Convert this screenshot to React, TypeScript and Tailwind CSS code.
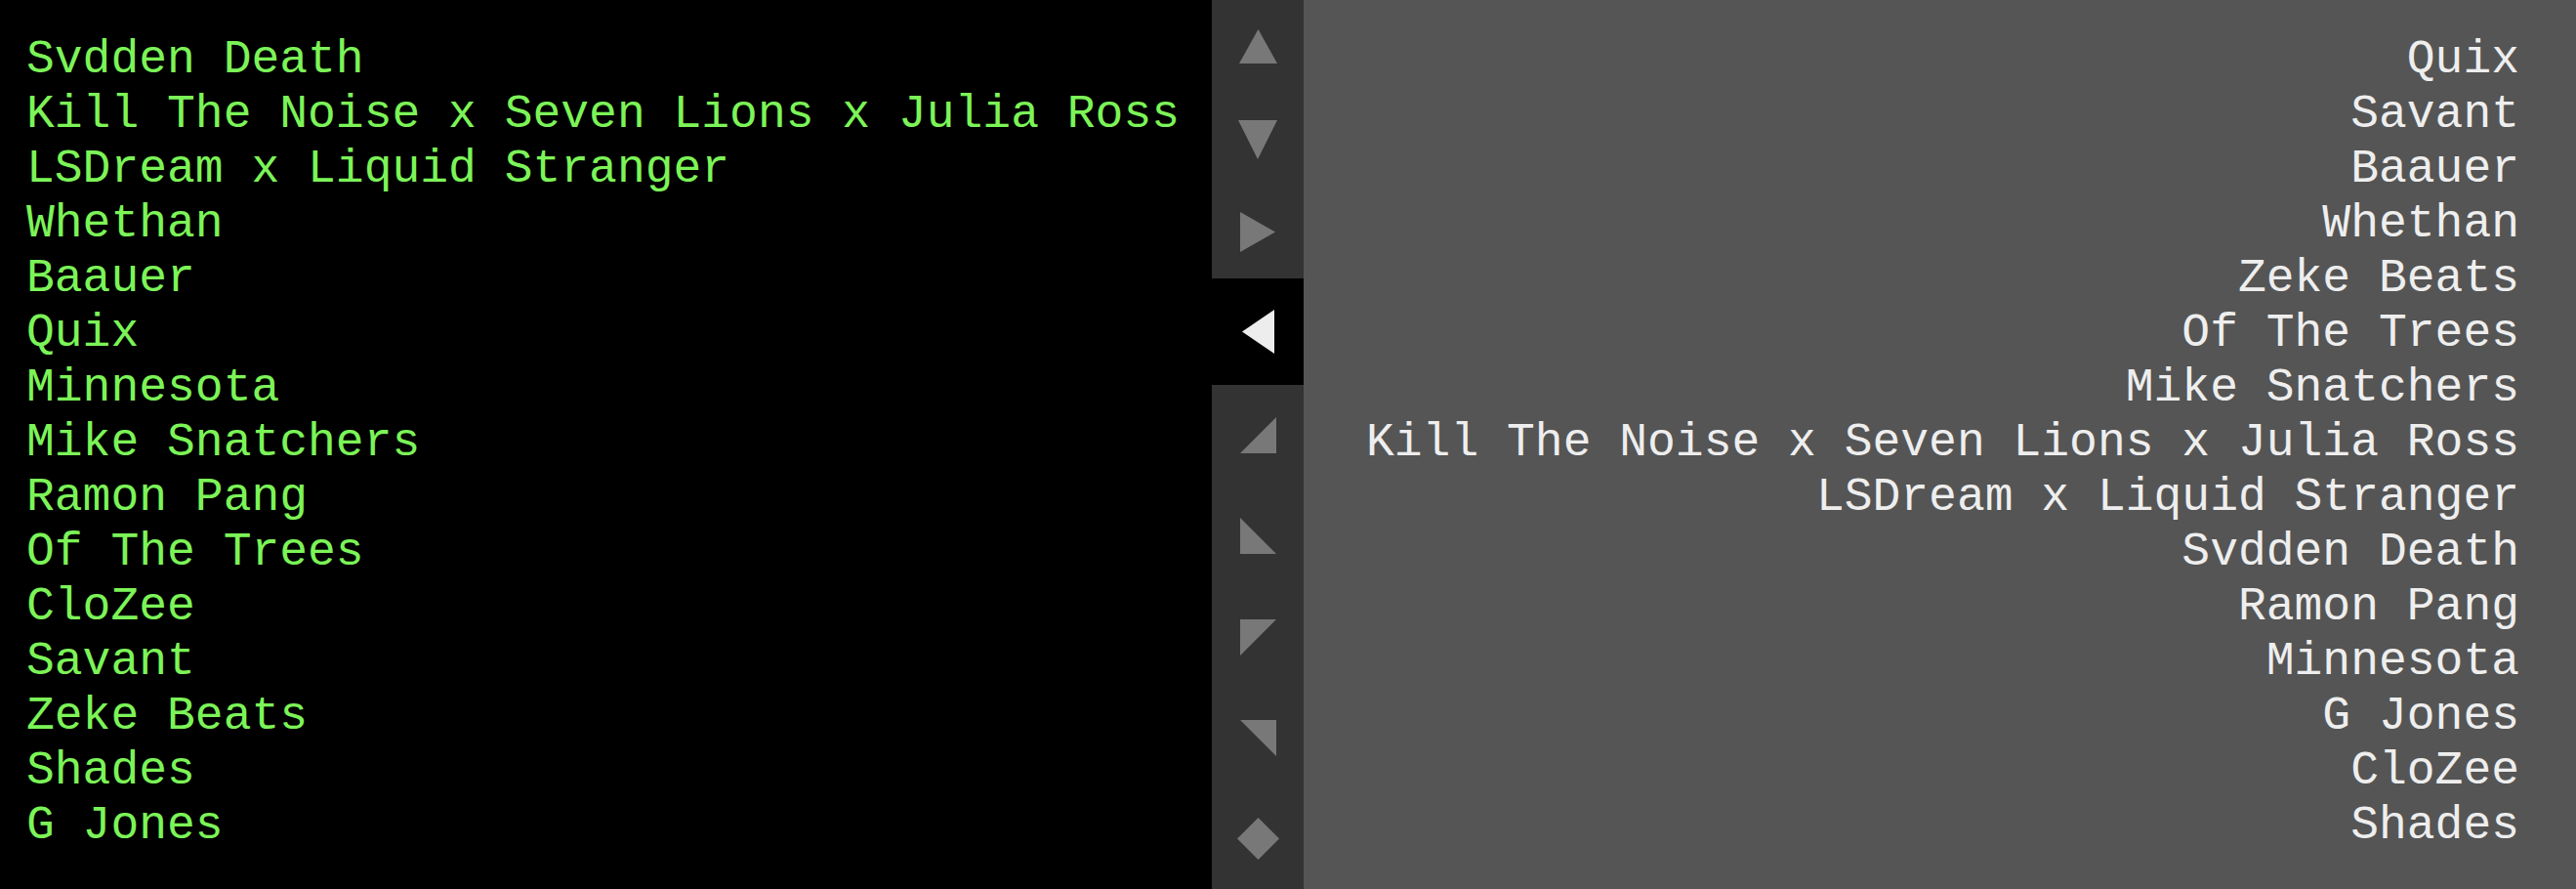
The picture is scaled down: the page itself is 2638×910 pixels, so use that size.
import React from "react";

const lineup = [
  "Svdden Death",
  "Kill The Noise x Seven Lions x Julia Ross",
  "LSDream x Liquid Stranger",
  "Whethan",
  "Baauer",
  "Quix",
  "Minnesota",
  "Mike Snatchers",
  "Ramon Pang",
  "Of The Trees",
  "CloZee",
  "Savant",
  "Zeke Beats",
  "Shades",
  "G Jones",
];

const ranked = [
  "Quix",
  "Savant",
  "Baauer",
  "Whethan",
  "Zeke Beats",
  "Of The Trees",
  "Mike Snatchers",
  "Kill The Noise x Seven Lions x Julia Ross",
  "LSDream x Liquid Stranger",
  "Svdden Death",
  "Ramon Pang",
  "Minnesota",
  "G Jones",
  "CloZee",
  "Shades",
];

// sort controls, top to bottom
const topButtons = [
  { key: "up", w: 39, h: 35, points: "19.5,0 39,35 0,35" },
  { key: "down", w: 40, h: 40, points: "0,0 40,0 20,40" },
  { key: "right", w: 36, h: 41, points: "0,0 36,20.5 0,41" },
];

const bottomButtons = [
  { key: "br", w: 37, h: 37, points: "37,0 37,37 0,37" },
  { key: "bl", w: 37, h: 37, points: "0,0 37,37 0,37" },
  { key: "tl", w: 37, h: 37, points: "0,0 37,0 0,37" },
  { key: "tr", w: 37, h: 37, points: "0,0 37,0 37,37" },
  { key: "diamond", w: 43, h: 43, points: "21.5,0 43,21.5 21.5,43 0,21.5" },
];

const Shape = ({ w, h, points, fill }: { w: number; h: number; points: string; fill: string }) => (
  <svg width={w} height={h} viewBox={`0 0 ${w} ${h}`}>
    <polygon points={points} fill={fill} />
  </svg>
);

export default function App() {
  return (
    <div className="flex h-screen w-full overflow-hidden font-['Liberation_Mono','Courier_New',monospace] text-[48px] leading-[56px]">
      {/* Lineup */}
      <div className="w-[1241px] shrink-0 bg-black pl-[27px] pt-[33px] text-[#7cf458]">
        {lineup.map((name) => (
          <div key={name} className="whitespace-pre">
            {name}
          </div>
        ))}
      </div>

      {/* Controls */}
      <div className="flex w-[94px] shrink-0 flex-col bg-[#333333]">
        {topButtons.map((b) => (
          <div key={b.key} className="flex h-[95px] items-center justify-center">
            <Shape w={b.w} h={b.h} points={b.points} fill="#787878" />
          </div>
        ))}
        <div className="flex h-[109px] items-center justify-center bg-black">
          <Shape w={33} h={45} points="33,0 33,45 0,22.5" fill="#ededed" />
        </div>
        {bottomButtons.map((b) => (
          <div key={b.key} className="flex flex-1 items-center justify-center">
            <Shape w={b.w} h={b.h} points={b.points} fill="#787878" />
          </div>
        ))}
      </div>

      {/* Ranking */}
      <div className="flex-1 bg-[#555555] pr-[58px] pt-[33px] text-right text-[#eeeeee]">
        {ranked.map((name) => (
          <div key={name} className="whitespace-pre">
            {name}
          </div>
        ))}
      </div>
    </div>
  );
}
